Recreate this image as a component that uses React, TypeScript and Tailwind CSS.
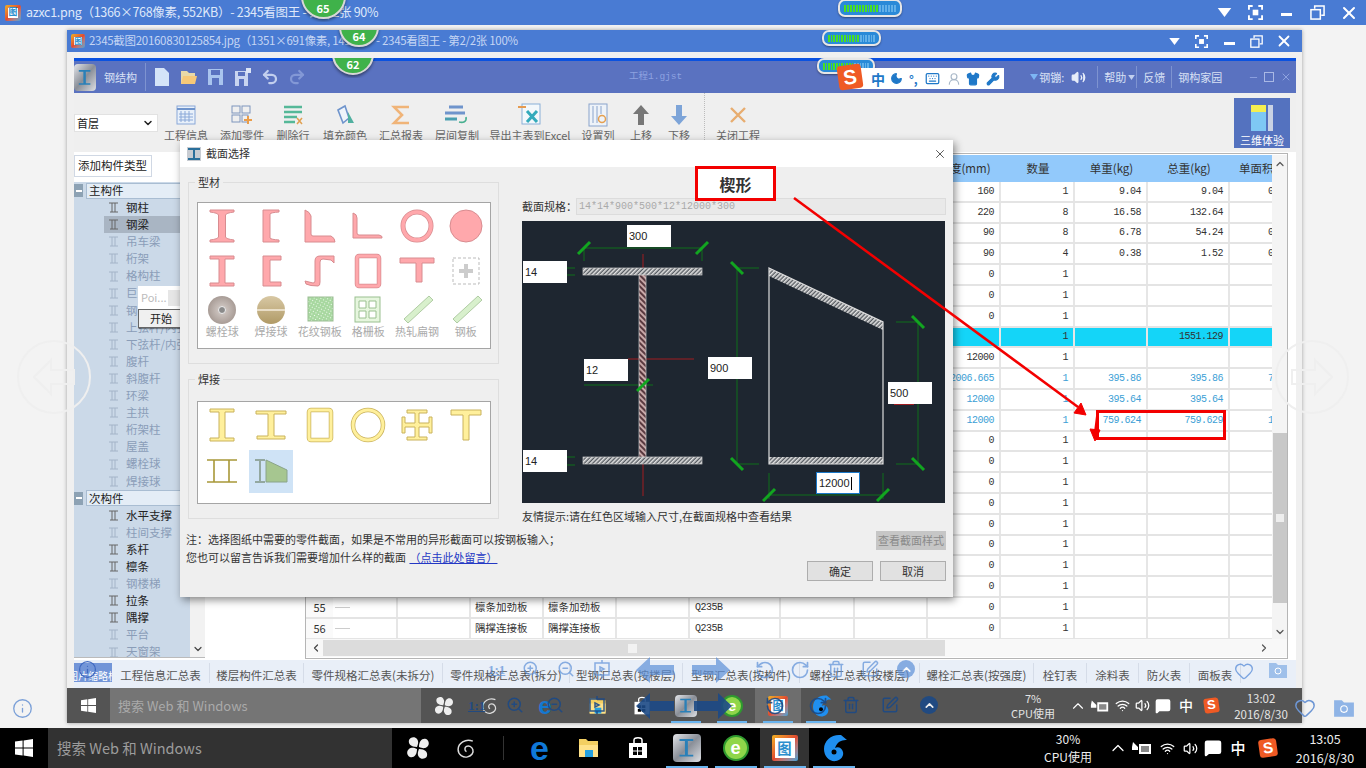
import React from "react";
import { ChevronDown, ChevronUp, ChevronLeft, ChevronRight, ZoomIn, ZoomOut, RotateCcw, RotateCw, Trash2, SquarePen, Heart, Info, Volume2, Wifi, MessageSquare, Wrench, Shirt, Keyboard, Moon, UserRound, X, Minus, Undo2, Redo2 } from "lucide-react";

const WinLogo = ({ s = 18 }: { s?: number }) => (
  <svg width={s} height={s} viewBox="0 0 18 18" fill="#fff">
    <path d="M0 2.6 7.6 1.5V8.5H0ZM8.6 1.4 18 0V8.5H8.6ZM0 9.5H7.6V16.5L0 15.4ZM8.6 9.5H18V18L8.6 16.6Z" />
  </svg>
);
const Pinwheel = ({ s = 24 }: { s?: number }) => (
  <svg width={s} height={s} viewBox="0 0 24 24" fill="#eee">
    <path d="M11 11C5 11 2 8 3 4 4 1 9 0 11 3 13 6 12 8 11 11Z" />
    <path d="M13 11C13 5 16 2 20 3 23 4 24 9 21 11 18 13 16 12 13 11Z" />
    <path d="M13 13C19 13 22 16 21 20 20 23 15 24 13 21 11 18 12 16 13 13Z" />
    <path d="M11 13C11 19 8 22 4 21 1 20 0 15 3 13 6 11 8 12 11 13Z" />
  </svg>
);
const Spiral = ({ s = 20, c = "#ddd" }: { s?: number; c?: string }) => (
  <svg width={s} height={s} viewBox="0 0 20 20" fill="none" stroke={c} strokeWidth="1.4">
    <path d="M16 3C9 0 2 5 2 11c0 5 5 8 9 7 4-1 6-4 5-7-1-3-4-4-6-3-2 1-2 4 0 5" />
  </svg>
);
const Gear = ({ h = 30 }: { h?: number }) => (
  <svg width={h} height={h} viewBox="0 0 30 30">
    <path d="M22 2c-9-1-17 5-17 14 0 8 6 13 12 12 5-1 8-5 7-9-1-4-5-6-8-4 1-3 3-6 6-7 2-1 4-1 6-1Z" fill="#1f8ff0" />
    <circle cx="15" cy="19" r="2.5" fill="#000" />
  </svg>
);
const SteelLogo = ({ w = 28, h = 28, r = "rounded-[4px]" }: { w?: number; h?: number; r?: string }) => (
  <div className={`flex items-center justify-center bg-gradient-to-br from-[#e4e6ea] via-[#8a8f98] to-[#dfe1e5] ${r}`} style={{ width: w, height: h }}>
    <svg width={w * 0.6} height={h * 0.7} viewBox="0 0 16 20" fill="#2a80b8"><path d="M1 1H15V3H9.5V17H15V19H1V17H6.5V3H1Z" /></svg>
  </div>
);
const GreenE = ({ s = 26 }: { s?: number }) => (
  <div className="flex items-center justify-center rounded-full border-2 border-[#2f9a2f] bg-[#8fd64a] font-['Liberation_Sans',sans-serif] font-bold leading-none text-white" style={{ width: s, height: s, fontSize: s * 0.7 }}>e</div>
);
const ViewerIcon = ({ s = 24 }: { s?: number }) => (
  <div className="flex items-center justify-center rounded-[2px] bg-gradient-to-br from-[#f0b020] via-[#e04a30] to-[#30a0d8] p-[3px]" style={{ width: s, height: s }}>
    <div className="flex h-full w-full items-center justify-center bg-white font-bold leading-none text-[#2b8fce]" style={{ fontSize: s * 0.55 }}>图</div>
  </div>
);
const FolderIcon = ({ s = 24 }: { s?: number }) => (
  <svg width={s} height={s} viewBox="0 0 24 24"><path d="M2 3H9L11 5H21V21H2Z" fill="#f3cf62" /><path d="M2 9H21V21H2Z" fill="#ffe28a" /><path d="M8 14H16V21H8Z" fill="#25a0e0" /></svg>
);
const StoreIcon = ({ s = 24 }: { s?: number }) => (
  <svg width={s} height={s} viewBox="0 0 24 24" fill="#fff"><path d="M3 7H21V22H3Z" /><path d="M8 7V4C8 1 16 1 16 4V7" fill="none" stroke="#fff" strokeWidth="1.5" /><path d="M7 11H11V14.5H7ZM12 11H16V14.5H12ZM7 15.5H11V19H7ZM12 15.5H16V19H12Z" fill="#000" /></svg>
);
const SogouS = ({ s = 22 }: { s?: number }) => (
  <div className="flex rotate-[-8deg] items-center justify-center rounded-[3px] bg-[#ef5a24] font-['Liberation_Sans',sans-serif] font-bold leading-none text-white" style={{ width: s, height: s, fontSize: s * 0.85 }}>S</div>
);
const Plug = () => (
  <svg width="22" height="16" viewBox="0 0 22 16" fill="#fff"><path d="M2 2 7 7V10H1V7ZM8 4H20V14H8Z" /><path d="M10 6H18V12H10Z" fill="#888" /></svg>
);
const WinBtns = ({ small }: { small?: boolean }) => {
  const cls = small ? "w-[27.5px]" : "w-[31px]";
  const s = small ? 13 : 15;
  return (
    <div className="flex items-center text-white">
      <div className={`${cls} flex justify-center`}><svg width={s} height={s - 6} viewBox="0 0 12 8" fill="#fff"><path d="M0 0H12L6 8Z" /></svg></div>
      <div className={`${cls} flex justify-center`}><svg width={s} height={s} viewBox="0 0 16 16" fill="none" stroke="#fff" strokeWidth="2"><path d="M1 5V1H5M11 1H15V5M15 11V15H11M5 15H1V11" /><rect x="5" y="5" width="6" height="6" fill="#fff" stroke="none" /></svg></div>
      <div className={`${cls} flex justify-center`}><div className="mt-1 h-[3px] w-[11px] bg-white" /></div>
      <div className={`${cls} flex justify-center`}><svg width={s} height={s} viewBox="0 0 16 16" fill="none" stroke="#fff" strokeWidth="1.6"><path d="M5 4V1H15V11H12" /><rect x="1" y="5" width="10" height="10" /></svg></div>
      <div className={`${cls} flex justify-center`}><X size={s + 5} strokeWidth={2.4} /></div>
    </div>
  );
};
const Badge = ({ n, left, bottom, d }: { n: number; left: number; bottom: number; d: number }) => (
  <div className="absolute overflow-hidden" style={{ left: left - d / 2 - 3, top: bottom - d / 2 - 8, width: d + 6, height: d / 2 + 12 }}>
    <div className="absolute left-[3px] rounded-full border-2 border-[#d8d8d8] bg-[#3fb24a] shadow-[0_2px_3px_rgba(0,0,0,.4)]" style={{ width: d, height: d, bottom: 3 }} />
    <div className="absolute left-0 right-0 text-center text-[11px] font-bold text-white" style={{ bottom: 6 }}>{n}</div>
  </div>
);
const Clip = ({ top, height, children }: { top: number; height: number; children: React.ReactNode }) => (
  <div className="absolute left-0 w-full overflow-hidden" style={{ top, height }}>{children}</div>
);
const Pill = ({ x, y, w, h }: { x: number; y: number; w: number; h: number }) => (
  <div className="absolute flex items-center rounded-[7px] border-2 border-[#e6e6e6] bg-[#2a8ad8] px-[4px] shadow-[0_1px_2px_rgba(0,0,0,.4)]" style={{ left: x, top: y, width: w, height: h }}>
    <div className="flex h-[7px] w-full gap-[1px]">
      {Array.from({ length: 18 }).map((_, i) => (
        <div key={i} className={`h-full flex-1 ${i < 12 ? "bg-[#48e022]" : "bg-[#62b0e8]"}`} />
      ))}
    </div>
  </div>
);

/* ---------- ribbon icons ---------- */
const RibbonIcons: Record<string, React.ReactNode> = {
  info: <svg width="20" height="20" viewBox="0 0 20 20" fill="none" stroke="#8aa8d8"><rect x="1" y="1" width="18" height="18" fill="#e8f0fa" /><path d="M1 4H19" stroke="#6f94cc" strokeWidth="2" /><path d="M5 6V17M9 6V17M13 6V17M3 9H17M3 12H17M3 15H17" /></svg>,
  add: <svg width="22" height="20" viewBox="0 0 22 20" fill="none" stroke="#7f96bd"><rect x="1" y="1" width="8" height="7" /><rect x="11" y="1" width="8" height="7" /><rect x="1" y="10" width="8" height="7" /><rect x="11" y="10" width="6" height="7" /><path d="M17 11V19M13 15H21" stroke="#ea9d4a" strokeWidth="2" /></svg>,
  del: <svg width="20" height="20" viewBox="0 0 20 20" stroke="#55b898" strokeWidth="2.5"><path d="M1 2H19M1 7H19M1 12H14M1 17H12" /><path d="M14 13L19 19M19 13L14 19" stroke="#e0a050" strokeWidth="1.5" /></svg>,
  fill: <svg width="22" height="22" viewBox="0 0 22 22" fill="none"><path d="M4 6 11 2 15 14 9 19Z" stroke="#6f94cc" strokeWidth="1.6" fill="#eef4fb" /><path d="M14 8 20 19H14Z" fill="#50b0a0" /></svg>,
  sum: <svg width="20" height="22" viewBox="0 0 20 22" fill="none" stroke="#f0b478" strokeWidth="2.6"><path d="M18 3H3L11 11 3 19H18" /></svg>,
  copy: <svg width="24" height="20" viewBox="0 0 24 20" stroke="#6f94cc" strokeWidth="3"><path d="M4 2H18M0 8H20" /><path d="M0 14H12" stroke="#4a9fb0" /><path d="M21 12C22 17 18 18 14 17" fill="none" stroke="#48b090" strokeWidth="1.6" /></svg>,
  excel: <svg width="24" height="24" viewBox="0 0 24 24" fill="none"><rect x="4" y="1" width="18" height="20" fill="#f3f8fb" stroke="#8ab0d8" /><path d="M9 8 19 19M19 8 9 19" stroke="#33aabb" strokeWidth="3" /><path d="M0 4H8" stroke="#e59a50" strokeWidth="2" /></svg>,
  cols: <svg width="20" height="24" viewBox="0 0 20 24" fill="none" stroke="#8aa4cc"><rect x="1" y="1" width="18" height="22" fill="#eef3f9" /><path d="M5 3V20M9 3V20M13 3V11" /><circle cx="14" cy="16" r="3.5" stroke="#e5a050" strokeWidth="1.5" /></svg>,
  up: <svg width="16" height="20" viewBox="0 0 16 20" fill="#777"><path d="M8 0 16 9H11V20H5V9H0Z" /></svg>,
  down: <svg width="16" height="20" viewBox="0 0 16 20" fill="#7da4d8"><path d="M8 20 16 11H11V0H5V11H0Z" /></svg>,
  close: <svg width="18" height="18" viewBox="0 0 18 18" stroke="#e8ad70" strokeWidth="2.4"><path d="M2 2 16 16M16 2 2 16" /></svg>,
};
const ribbon: [string, string, number][] = [
  ["info", "工程信息", 56], ["add", "添加零件", 56], ["del", "删除行", 46], ["fill", "填充颜色", 58], ["sum", "汇总报表", 54],
  ["copy", "层间复制", 58], ["excel", "导出主表到Excel", 88], ["cols", "设置列", 48], ["up", "上移", 38], ["down", "下移", 38],
];
const RibbonItem = ({ k, label, w }: { k: string; label: string; w: number }) => (
  <div className="flex flex-col items-center" style={{ width: w }}>
    <div className="flex h-[26px] items-center justify-center">{RibbonIcons[k]}</div>
    <div className="whitespace-nowrap text-[11px] leading-[14px] text-[#666]">{label}</div>
  </div>
);

/* ---------- tree ---------- */
const main = [["钢柱", 1], ["钢梁", 2], ["吊车梁", 0], ["桁架", 0], ["格构柱", 0], ["巨型柱", 0], ["钢管桁架", 0], ["上弦杆/内弦杆", 0], ["下弦杆/内弦杆", 0], ["腹杆", 0], ["斜腹杆", 0], ["环梁", 0], ["主拱", 0], ["桁架柱", 0], ["屋盖", 0], ["螺栓球", 0], ["焊接球", 0]] as [string, number][];
const sub = [["水平支撑", 1], ["柱间支撑", 0], ["系杆", 1], ["檩条", 1], ["钢楼梯", 0], ["拉条", 1], ["隅撑", 1], ["平台", 0], ["天窗架", 0]] as [string, number][];
const TreeRow = ({ t, on }: { t: string; on: number }) => (
  <div className="flex h-[17.1px] items-center pl-[34px]">
    <div className={`flex h-[17px] items-center ${on === 2 ? "-ml-[4px] w-[86px] bg-[#a9b5c3] pl-[4px]" : ""}`}>
      <svg width="11" height="11" viewBox="0 0 11 11" fill="none" stroke={on ? "#666" : "#a4b4c8"} strokeWidth="1"><path d="M1 1H10M2 10H10M4 1V10M7 1V10" /></svg>
      <span className={`ml-[7px] whitespace-nowrap text-[11.5px] ${on ? "text-[#222]" : "text-[#8a9db8]"}`}>{t}</span>
    </div>
  </div>
);
const GroupRow = ({ t }: { t: string }) => (
  <div className="flex h-[17.1px] items-center">
    <div className="flex h-[13px] w-[9px] items-center justify-center bg-[#8da2b4]"><div className="h-[2px] w-[6px] bg-white" /></div>
    <div className="ml-[3px] flex h-[16px] w-[104px] items-center border border-[#a9bdd2] bg-[#e4edf6] pl-[2px] text-[11.5px] text-[#222]">{t}</div>
  </div>
);

/* ---------- table ---------- */
const colClass = "grid grid-cols-[27px_65px_73px_73px_73px_73px_91px_74px_73px_73px_74px_73px_82px_43px] w-[968px]";
const W = ["160", "220", "90", "90", "0", "0", "0", "", "12000", "2006.665", "12000", "12000", "0", "0", "0", "0", "0", "0", "0", "0", "0", "0"];
const Q = ["1", "8", "8", "4", "1", "1", "1", "1", "1", "1", "1", "1", "1", "1", "1", "1", "1", "1", "1", "1", "1", "1"];
const U = ["9.04", "16.58", "6.78", "0.38", "", "", "", "", "", "395.86", "395.64", "759.624"];
const T = ["9.04", "132.64", "54.24", "1.52", "", "", "", "1551.129", "", "395.86", "395.64", "759.629"];
const A: Record<number, string> = { 0: "0", 2: "0", 3: "0", 9: "7", 11: "16" };
const Cell = ({ children, c, r }: { children?: React.ReactNode; c?: string; r?: boolean }) => (
  <div className={`flex items-center overflow-hidden whitespace-nowrap border-r-2 border-[#e6e6e6] px-[5px] font-['Liberation_Mono',monospace] text-[10px] tracking-[-0.5px] ${r === false ? "justify-start" : "justify-end"} ${c ?? ""}`}>{children}</div>
);
const TableRow = ({ i }: { i: number }) => {
  const blue = i >= 9 && i <= 11;
  const hi = i === 7;
  const col = blue ? "text-[#3d9fd6]" : "text-[#333]";
  const num = 35 + i;
  const names: Record<number, string> = { 55: "檩条加劲板", 56: "隅撑连接板" };
  return (
    <div className={`${colClass} h-[20.8px] border-b-2 border-[#e4e4e4] ${hi ? "bg-[#14d5f8]" : "bg-white"}`}>
      <div className="flex items-center justify-center bg-[#fafafa] text-[11px] text-[#333]">{num}</div>
      <div className="flex items-center border-r-2 border-[#e6e6e6] pl-[2px]"><div className="h-px w-[15px] bg-[#ccc]" /></div>
      <Cell />
      <div className="flex items-center border-r-2 border-[#e6e6e6] pl-[4px] text-[10.5px] text-[#333]">{names[num]}</div>
      <div className="flex items-center border-r-2 border-[#e6e6e6] pl-[4px] text-[10.5px] text-[#333]">{names[num]}</div>
      <Cell />
      <Cell r={false} c="text-[#333]">{num >= 55 ? "Q235B" : ""}</Cell>
      <Cell />
      <Cell />
      <Cell c={col}>{W[i]}</Cell>
      <Cell c={col}>{Q[i]}</Cell>
      <Cell c={col}>{U[i]}</Cell>
      <Cell c={col}>{T[i]}</Cell>
      <div className={`flex items-center justify-start overflow-hidden pl-[38px] font-['Liberation_Mono',monospace] text-[10px] ${col}`}>{A[i]}</div>
    </div>
  );
};

/* ---------- section shapes ---------- */
const Sec = ({ children, f, s }: { children: React.ReactNode; f: string; s: string }) => (
  <div className="flex items-center justify-center">
    <svg width="44" height="44" viewBox="0 0 44 44" fill={f} stroke={s} strokeWidth="1">{children}</svg>
  </div>
);
const Row3 = ({ children, t }: { children: React.ReactNode; t: string }) => (
  <div className="flex flex-col items-center pt-[2px]">
    <svg width="44" height="30" viewBox="0 0 44 30">{children}</svg>
    <div className="-mt-[1px] whitespace-nowrap text-[11px] leading-[14px] text-[#aaa]">{t}</div>
  </div>
);
const red = { f: "#ffa8ac", s: "#d88c90" };
const yel = { f: "#fff09c", s: "#c9b25c" };

/* ---------- drawing ---------- */
const Tick = ({ x, y, d }: { x: number; y: number; d: "/" | "\\" }) => (
  <line x1={x - 6} y1={d === "/" ? y + 6 : y - 6} x2={x + 6} y2={d === "/" ? y - 6 : y + 6} stroke="#12a520" strokeWidth="3" />
);
const Field = ({ x, y, t, active }: { x: number; y: number; t: string; active?: boolean }) => (
  <div className={`absolute flex h-[22px] w-[44px] items-center bg-white pl-[2px] font-['Liberation_Sans',sans-serif] text-[11px] text-[#222] ${active ? "border border-[#1a78c8]" : ""}`} style={{ left: x, top: y }}>
    {t}{active && <span className="ml-px h-[13px] w-px bg-black" />}
  </div>
);
const Drawing = () => (
  <div className="relative h-[282px] w-[423px] bg-[#1e2630]">
    <svg width="423" height="282" className="block">
      <defs>
        <pattern id="h" width="3" height="3" patternUnits="userSpaceOnUse" patternTransform="rotate(45)">
          <rect width="3" height="3" fill="#555a60" />
          <rect width="1.6" height="3" fill="#e2e2e2" />
        </pattern>
        <pattern id="hr" width="4" height="4" patternUnits="userSpaceOnUse" patternTransform="rotate(-45)">
          <rect width="4" height="4" fill="#c8a8a8" />
          <rect width="2" height="4" fill="#5a3a40" />
        </pattern>
      </defs>
      <g stroke="#a01c20" strokeWidth="1" fill="none">
        <path d="M121 33V275M106 138H172" />
        <path d="M372 183H392" strokeWidth="2" />
      </g>
      <g stroke="#0f6f1a" strokeWidth="1" fill="none">
        <path d="M62 27H180M62 27V40M180 27V40" />
        <path d="M215 47V243M215 47H237M215 243H237" />
        <path d="M396 101V243M374 101H396M374 243H396" />
        <path d="M247 274H361M247 252V278M361 252V278" />
        <path d="M62 164H131" />
        <path d="M45 47H53M45 54H53M45 236H53M45 244H53" />
      </g>
      <Tick x={62} y={27} d="/" /><Tick x={180} y={27} d="/" />
      <Tick x={215} y={47} d="\" /><Tick x={215} y={243} d="\" />
      <Tick x={396} y={101} d="\" /><Tick x={396} y={243} d="\" />
      <Tick x={247} y={274} d="/" /><Tick x={361} y={274} d="/" />
      <rect x="61" y="47" width="119" height="7" fill="url(#h)" stroke="#ccc" strokeWidth=".7" />
      <rect x="61" y="236" width="119" height="7" fill="url(#h)" stroke="#ccc" strokeWidth=".7" />
      <rect x="117" y="54" width="7" height="182" fill="url(#hr)" stroke="#ccc" strokeWidth=".7" />
      <Tick x={121} y={164} d="/" />
      <path d="M247 47 361 101V109L247 55Z" fill="url(#h)" />
      <rect x="247" y="236" width="114" height="7" fill="url(#h)" />
      <path d="M247 47 361 101V243H247Z" fill="none" stroke="#ddd" strokeWidth="1.2" />
    </svg>
    <Field x={105} y={4} t="300" />
    <Field x={1} y={40} t="14" />
    <Field x={62} y={138} t="12" />
    <Field x={1} y={229} t="14" />
    <Field x={186} y={136} t="900" />
    <Field x={366} y={161} t="500" />
    <Field x={294} y={251} t="12000" active />
  </div>
);

const Dialog = () => (
  <div className="absolute left-[180px] top-[140px] flex h-[457px] w-[773px] flex-col bg-[#efefef] shadow-[2px_3px_8px_rgba(0,0,0,.45)]">
    <div className="flex h-[27px] shrink-0 items-center bg-white px-[7px]">
      <svg width="14" height="14" viewBox="0 0 14 14"><rect width="14" height="14" fill="#c8ccd2" /><path d="M1 2H13M1 12H13M7 2V12" stroke="#2a6f9a" strokeWidth="2" /></svg>
      <span className="ml-[5px] text-[11px] text-[#333]">截面选择</span>
      <X size={14} strokeWidth={1.5} className="ml-auto mr-[-1px] text-[#444]" />
    </div>
    <div className="flex flex-1">
      <div className="w-[342px] pl-[6px]">
        <div className="relative ml-[2px] mt-[15px] h-[182px] w-[311px] border border-[#dedede] pl-[8px] pt-[19px]">
          <span className="absolute left-[6px] top-[-8px] bg-[#efefef] px-[3px] text-[11px] leading-[14px] text-[#333]">型材</span>
          <div className="grid h-[147px] w-[294px] grid-cols-6 grid-rows-[45px_45px_52px] border border-[#a5a5a5] bg-white">
            <Sec {...red}><path d="M10 6H34V8Q26 9 25.5 11V33Q26 35 34 36V38H10V36Q18 35 18.5 33V11Q18 9 10 8Z" /></Sec>
            <Sec {...red}><path d="M14 6H30V8Q22 8.5 21 10V34Q22 35.5 30 36V38H14Z" /></Sec>
            <Sec {...red}><path d="M7 6Q12 8 13 12V30Q13 32 15 32H33Q37 34 37 38H7Z" /></Sec>
            <Sec {...red}><path d="M7 9Q11 10 11 14V29Q11 31 13 31H33Q37 32 36 34H7Z" /></Sec>
            <Sec {...red}><circle cx="22" cy="22" r="14" fill="none" stroke="#d88c90" strokeWidth="5" /><circle cx="22" cy="22" r="14" fill="none" stroke="#ffa8ac" strokeWidth="3.5" /></Sec>
            <Sec {...red}><circle cx="22" cy="22" r="16" /></Sec>
            <Sec {...red}><path d="M10 7H34V10H25V34H34V37H10V34H19V10H10Z" /></Sec>
            <Sec {...red}><path d="M14 7H32V11H21V33H32V37H14Z" /></Sec>
            <Sec {...red}><path d="M36 7H22Q17 7 17 12V32Q17 34 15 34L7 32 8 35Q12 37 20 37 22 37 22 33V13Q22 10 25 10L33 11 36 14Z" /></Sec>
            <Sec {...red}><rect x="11" y="7" width="22" height="30" rx="2" fill="none" stroke="#d88c90" strokeWidth="4.5" /><rect x="11" y="7" width="22" height="30" rx="2" fill="none" stroke="#ffa8ac" strokeWidth="3" /></Sec>
            <Sec {...red}><path d="M5 9H39V14H27V33H21V14H5Z" /></Sec>
            <Sec f="#ccc" s="none"><rect x="9" y="9" width="26" height="26" fill="none" stroke="#bbb" strokeDasharray="3 2" /><path d="M20 15H24V20H29V24H24V29H20V24H15V20H20Z" /></Sec>
            <Row3 t="螺栓球"><defs><radialGradient id="b1"><stop offset="0" stopColor="#d8d0cc" /><stop offset="1" stopColor="#a89c96" /></radialGradient></defs><circle cx="22" cy="15" r="14" fill="url(#b1)" /><circle cx="22" cy="15" r="3.5" fill="#8a8a8a" stroke="#eee" /></Row3>
            <Row3 t="焊接球"><defs><linearGradient id="b2" x1="0" y1="0" x2="0" y2="1"><stop offset="0" stopColor="#d8c8a4" /><stop offset="1" stopColor="#b09a66" /></linearGradient></defs><circle cx="22" cy="15" r="14" fill="url(#b2)" /><path d="M8 15H36" stroke="#f4eddc" strokeWidth="1.5" /></Row3>
            <Row3 t="花纹钢板"><defs><pattern id="b3" width="3" height="3" patternUnits="userSpaceOnUse" patternTransform="rotate(30)"><rect width="3" height="3" fill="#a8d8a0" /><rect width="1" height="1" fill="#f2fbf0" /></pattern></defs><rect x="10" y="2" width="25" height="24" fill="url(#b3)" stroke="#9bbd94" /></Row3>
            <Row3 t="格栅板"><rect x="9" y="2" width="25" height="25" fill="#e6f6de" stroke="#9ac090" /><path d="M13 6H20V13H13ZM23 6H30V13H23ZM13 16H20V23H13ZM23 16H30V23H23Z" fill="#fff" stroke="#9ac090" /></Row3>
            <Row3 t="热轧扁钢"><path d="M34 1 38 5 13 28 9 24Z" fill="#d8f0cc" stroke="#b0cca4" /></Row3>
            <Row3 t="钢板"><path d="M34 1 38 5 13 28 9 24Z" fill="#d8f0cc" stroke="#b0cca4" /></Row3>
          </div>
        </div>
        <div className="relative ml-[2px] mt-[15px] h-[140px] w-[311px] border border-[#dedede] pl-[8px] pt-[21px]">
          <span className="absolute left-[6px] top-[-8px] bg-[#efefef] px-[3px] text-[11px] leading-[14px] text-[#333]">焊接</span>
          <div className="grid h-[103px] w-[294px] grid-cols-6 grid-rows-[46px_46px] border border-[#a5a5a5] bg-white">
            <Sec {...yel}><path d="M10 6H34V9H25V35H34V38H10V35H19V9H10Z" /></Sec>
            <Sec {...yel}><path d="M7 8H37V11H25V33H36V36H8V33H19V11H7Z" /></Sec>
            <Sec {...yel}><rect x="11" y="7" width="22" height="30" rx="2" fill="none" stroke="#c9b25c" strokeWidth="4.5" /><rect x="11" y="7" width="22" height="30" rx="2" fill="none" stroke="#fff09c" strokeWidth="3" /></Sec>
            <Sec {...yel}><circle cx="22" cy="22" r="15" fill="none" stroke="#c9b25c" strokeWidth="4.5" /><circle cx="22" cy="22" r="15" fill="none" stroke="#fff09c" strokeWidth="3" /></Sec>
            <Sec {...yel}><path d="M12 7H32V10H24V20H34V14H37V30H34V24H24V34H32V37H12V34H20V24H10V30H7V14H10V20H20V10H12Z" /></Sec>
            <Sec {...yel}><path d="M7 7H37V12H25V37H19V12H7Z" /></Sec>
            <Sec f="none" s="#a89838"><path d="M7 11H37M7 33H37M14 11V33M29 11V33" strokeWidth="1.6" /></Sec>
            <div className="flex items-center justify-center">
              <div className="flex h-[43px] w-[44px] items-center justify-center bg-[#cfe3f6]">
                <svg width="34" height="26" viewBox="0 0 34 26" fill="none"><path d="M1 2H11M1 24H11M6 2V24" stroke="#93a8a0" strokeWidth="2" /><path d="M12 2 33 12V24H12Z" fill="#a6c690" stroke="#8aa48a" /></svg>
              </div>
            </div>
          </div>
        </div>
        <div className="mt-[11px] whitespace-nowrap text-[11px] leading-[18px] text-[#333]">
          <div>注：选择图纸中需要的零件截面，如果是不常用的异形截面可以按钢板输入；</div>
          <div>您也可以留言告诉我们需要增加什么样的截面 <span className="ml-[1px] text-[#2438c4] underline">（点击此处留言）</span></div>
        </div>
      </div>
      <div className="w-[424px] pt-[31px]">
        <div className="flex h-[17px] items-center">
          <span className="w-[54px] whitespace-nowrap text-[11px] text-[#333]">截面规格：</span>
          <div className="flex h-[17px] flex-1 items-center border border-[#dcdcdc] bg-[#e9e9e9] pl-[2px] font-['Liberation_Mono',monospace] text-[10px] text-[#aaa]">14*14*900*500*12*12000*300</div>
        </div>
        <div className="mt-[6px]"><Drawing /></div>
        <div className="mt-[4px] h-[18px] text-[11px] leading-[18px] text-[#333]">友情提示:请在红色区域输入尺寸,在截面规格中查看结果</div>
        <div className="mt-[6px] flex justify-end">
          <div className="flex h-[19px] w-[70px] items-center justify-center bg-[#c6c6c6] text-[11px] text-[#8a8a8a]">查看截面样式</div>
        </div>
        <div className="mt-[11px] flex justify-end gap-[7px]">
          <div className="flex h-[20px] w-[66px] items-center justify-center border border-[#adadad] bg-[#e1e1e1] text-[11px] text-[#333]">确定</div>
          <div className="flex h-[20px] w-[66px] items-center justify-center border border-[#adadad] bg-[#e1e1e1] text-[11px] text-[#333]">取消</div>
        </div>
      </div>
    </div>
  </div>
);

const tabs: [string, number][] = [["工程信息汇总表", 98], ["楼层构件汇总表", 94], ["零件规格汇总表(未拆分)", 139], ["零件规格汇总表(拆分)", 127], ["型钢汇总表(按楼层)", 113], ["型钢汇总表(按构件)", 117], ["螺栓汇总表(按楼层)", 120], ["螺栓汇总表(按强度)", 114], ["栓钉表", 53], ["涂料表", 52], ["防火表", 51], ["面板表", 51]];

const Slot = ({ w, children, c }: { w: number; children?: React.ReactNode; c?: string }) => (
  <div className={`relative flex h-full shrink-0 items-center justify-center ${c ?? ""}`} style={{ width: w }}>{children}</div>
);
const Run = ({ w = 30 }: { w?: number }) => <div className="absolute bottom-0 left-1/2 h-[2px] -translate-x-1/2 bg-[#6ab4ee]" style={{ width: w }} />;

const Tray = ({ big, w }: { big?: boolean; w: number[] }) => (
  <>
    <Slot w={w[0]}><ChevronUp size={big ? 20 : 18} className="text-white" strokeWidth={1.5} /></Slot>
    <Slot w={w[1]}><Plug /></Slot>
    <Slot w={w[2]}><Wifi size={15} className="text-white" /></Slot>
    <Slot w={w[3]}><Volume2 size={15} className="text-white" /></Slot>
    <Slot w={w[4]}><MessageSquare size={big ? 18 : 16} fill="#fff" className="text-white" /></Slot>
    <Slot w={w[5]}><span className={`${big ? "text-[15px]" : "text-[14px]"} font-medium text-white`}>中</span></Slot>
    <Slot w={w[6]}><SogouS s={big ? 18 : 15} /></Slot>
  </>
);

export default function App() {
  return (
    <div className="relative flex h-[768px] w-[1366px] flex-col overflow-hidden bg-[#f3f3f3] font-['Noto_Sans_CJK_SC','Noto_Sans',sans-serif]">
      {/* outer title bar */}
      <div className="flex h-[25px] shrink-0 items-center bg-[#497bd3] pl-[5px]">
        <ViewerIcon s={16} />
        <span className="ml-[5px] whitespace-nowrap text-[12.5px] tracking-[-0.3px] text-[#dfe8fa]">azxc1.png（1366×768像素, 552KB）- 2345看图王 - 第1/2张 90%</span>
        <div className="ml-auto pr-[2px]"><WinBtns /></div>
      </div>

      {/* desktop */}
      <div className="h-[703px] shrink-0">
        <div className="ml-[67px] mt-[5px] flex h-[693px] w-[1235px] flex-col bg-[#f0f0f0] shadow-[0_0_4px_rgba(0,0,0,.35)]">
          <div className="flex h-[22px] shrink-0 items-center bg-[#497bd3] pl-[4px]">
            <ViewerIcon s={14} />
            <span className="ml-[4px] whitespace-nowrap text-[11.5px] tracking-[-0.3px] text-[#c5d6f4]">2345截图20160830125854.jpg（1351×691像素, 141KB）- 2345看图王 - 第2/2张 100%</span>
            <div className="ml-auto pr-[4px]"><WinBtns small /></div>
          </div>
          <div className="h-[6px] shrink-0" />
          {/* inner app */}
          <div className="ml-[7px] flex h-[630px] w-[1222px] shrink-0 flex-col bg-white">
            <div className="h-[3px] shrink-0 bg-[#0a52e0]" />
            <div className="flex h-[32px] shrink-0 items-center bg-[#5a72c0]">
              <SteelLogo w={22} h={27} />
              <span className="ml-[8px] whitespace-nowrap text-[11px] text-[#d8e0f4]">钢结构</span>
              <div className="ml-[8px] h-[28px] w-px bg-[#7e93d0]" />
              <div className="ml-[2px] flex h-full items-center">
                <Slot w={27}><svg width="14" height="18" viewBox="0 0 14 18" fill="#d4e4f8"><path d="M0 0H9L14 5V18H0Z" /></svg></Slot>
                <Slot w={27}><svg width="16" height="14" viewBox="0 0 16 14"><path d="M0 1H6L8 3H14V14H0Z" fill="#e8d8a8" /><path d="M2 6H16L14 14H0Z" fill="#f6c878" /></svg></Slot>
                <Slot w={27}><svg width="15" height="16" viewBox="0 0 15 16" fill="#a9c4ee"><path d="M0 0H15V16H0Z" /><path d="M3 1H12V6H3ZM4 9H11V16H4Z" fill="#5a72c0" /></svg></Slot>
                <Slot w={27}><svg width="16" height="18" viewBox="0 0 16 18" fill="#c8d4f0"><path d="M0 3H13V18H0Z" /><path d="M3 4H10V8H3ZM4 11H9V18H4Z" fill="#5a72c0" /><path d="M11 0H16V5H11Z" fill="#dbe4f6" /></svg></Slot>
                <Slot w={27}><Undo2 size={18} strokeWidth={3} className="text-[#c2cfee]" /></Slot>
                <Slot w={27}><Redo2 size={18} strokeWidth={3} className="text-[#8398d6]" /></Slot>
              </div>
              <span className="ml-[319px] whitespace-nowrap font-['Liberation_Mono','Noto_Sans_CJK_SC',monospace] text-[9.5px] text-[#8ea2e0]">工程1.gjst</span>
              <div className="ml-[348px] flex h-full items-center text-[11px] text-[#d8e0f4]">
                <svg width="8" height="6" viewBox="0 0 8 6" fill="#7db6f4"><path d="M0 0H8L4 6Z" /></svg>
                <span className="ml-[1px] whitespace-nowrap">钢镚:</span>
                <Volume2 size={15} fill="#e8eefa" className="ml-[7px] text-[#e8eefa]" />
                <div className="ml-[11px] h-[22px] w-px bg-[#7e93d0]" />
                <span className="ml-[6px] whitespace-nowrap">帮助</span>
                <svg className="ml-[2px]" width="7" height="5" viewBox="0 0 8 6" fill="#c2cfee"><path d="M0 0H8L4 6Z" /></svg>
                <div className="ml-[1px] h-[22px] w-px bg-[#7e93d0]" />
                <span className="ml-[6px] whitespace-nowrap">反馈</span>
                <div className="ml-[6px] h-[22px] w-px bg-[#7e93d0]" />
                <span className="ml-[6px] whitespace-nowrap">钢构家园</span>
                <Minus size={11} className="ml-[26px] text-[#8ea2e0]" />
                <div className="ml-[5px] h-[10px] w-[10px] border border-[#a9b8e4]" />
                <X size={12} className="ml-[6px] text-[#8ea2e0]" />
              </div>
            </div>
            <div className="flex h-[59px] shrink-0 bg-[#efefef]">
              <div className="w-[84px] pt-[21px]">
                <div className="flex h-[18px] w-[84px] items-center justify-between border border-[#e2e2e2] bg-white pl-[2px] pr-[3px] text-[11px] text-[#222]">首层<ChevronDown size={12} strokeWidth={3} /></div>
              </div>
              <div className="flex pt-[9px]">
                {ribbon.map(([k, l, w]) => <RibbonItem key={l} k={k} label={l} w={w} />)}
              </div>
              <div className="ml-[6px] h-full border-l border-dotted border-[#bbb]" />
              <div className="pt-[9px]"><RibbonItem k="close" label="关闭工程" w={66} /></div>
              <div className="ml-[463px] mt-[5px] flex h-[50px] w-[56px] flex-col items-center bg-[#5472bf] pt-[7px]">
                <svg width="22" height="26" viewBox="0 0 22 26"><rect width="15" height="7" fill="#f4ee50" /><rect y="7" width="15" height="19" fill="#7ec8f4" /><rect x="17" width="5" height="26" fill="#c9d2e4" /></svg>
                <div className="mt-[2px] whitespace-nowrap text-[11px] leading-[14px] text-white">三维体验</div>
              </div>
            </div>
            {/* main */}
            <div className="flex h-[508px] shrink-0 bg-white">
              <div className="w-[131px] shrink-0 pt-[3px]">
                <div className="flex h-[22px] w-[78px] items-center border border-[#d0d8e4] pl-[3px] text-[11.5px] text-[#222]">添加构件类型</div>
                <div className="mt-[5px] flex h-[476px] border-b border-[#bbb]">
                  <div className="w-[116px] overflow-hidden bg-[#cbd9e8]">
                    <GroupRow t="主构件" />
                    {main.map(([t, o]) => <TreeRow key={t} t={t} on={o} />)}
                    <GroupRow t="次构件" />
                    {sub.map(([t, o]) => <TreeRow key={t} t={t} on={o} />)}
                  </div>
                  <div className="flex w-[15px] flex-col items-center justify-end bg-[#f2f2f2] pb-[2px]"><ChevronDown size={12} strokeWidth={2.4} className="text-[#444]" /></div>
                </div>
              </div>
              <div className="w-[100px] shrink-0" />
              <div className="mt-px flex h-[506px] w-[983px] shrink-0 flex-col border border-[#b5b5b5] bg-white">
                <div className="h-px" />
                <div className="flex h-[484px]">
                  <div className="w-[966px] overflow-hidden">
                    <div className={`${colClass} h-[27px] bg-[#92c9fb] text-[11.5px] text-[#333]`}>
                      <div /><div /><div /><div /><div /><div /><div /><div /><div />
                      <div className="flex items-center justify-center whitespace-nowrap">长度(mm)</div>
                      <div className="flex items-center justify-center">数量</div>
                      <div className="flex items-center justify-center whitespace-nowrap">单重(kg)</div>
                      <div className="flex items-center justify-center whitespace-nowrap">总重(kg)</div>
                      <div className="flex items-center overflow-hidden whitespace-nowrap pl-[9px]">单面积</div>
                    </div>
                    {Array.from({ length: 22 }).map((_, i) => <TableRow key={i} i={i} />)}
                  </div>
                  <div className="flex w-[15px] flex-col items-center bg-[#f4f4f4]">
                    <ChevronUp size={12} strokeWidth={2.4} className="mt-[3px] text-[#555]" />
                    <div className="mt-[263px] flex h-[170px] w-[14px] items-center justify-center bg-[#c8c8c8]"><div className="h-[8px] w-[8px] bg-[#eee]" /></div>
                    <ChevronDown size={12} strokeWidth={2.4} className="mt-auto mb-[1px] text-[#555]" />
                  </div>
                </div>
                <div className="flex h-[18px] items-center bg-[#f8f8f8]">
                  <ChevronLeft size={12} strokeWidth={2.4} className="ml-[4px] text-[#444]" />
                  <div className="ml-[1px] flex h-[16px] w-[622px] items-center justify-end bg-[#dcdcdc] pr-[308px]"><div className="h-[9px] w-[9px] bg-[#f2f2f2]" /></div>
                  <ChevronRight size={12} strokeWidth={2.4} className="ml-auto mr-[17px] text-[#555]" />
                </div>
              </div>
            </div>
            {/* tabs */}
            <div className="flex h-[28px] shrink-0 items-start bg-[#e9eff8] pt-[3px]">
              <div className="flex h-[19px] w-[38px] shrink-0 items-end justify-center overflow-hidden whitespace-nowrap bg-[#7295d8] text-[10px] leading-[12px] text-white">图片缩略栏</div>
              {tabs.map(([t, w]) => (
                <div key={t} className="flex h-[20px] shrink-0 items-center justify-center whitespace-nowrap border-r border-[#d5dce8] pt-[6px] text-[11.5px] text-[#555]" style={{ width: w }}>{t}</div>
              ))}
            </div>
          </div>
          {/* inner taskbar */}
          <div className="flex h-[35px] shrink-0 items-center bg-[#545454]">
            <Slot w={43}><WinLogo s={15} /></Slot>
            <div className="flex h-full w-[311px] items-center bg-[#757575] pl-[8px] text-[13px] text-[#aaa]">搜索 Web 和 Windows</div>
            <Slot w={46}><Pinwheel s={20} /></Slot>
            <Slot w={46}><Spiral s={18} /></Slot>
            <Slot w={9} />
            <Slot w={46}><span className="font-['Liberation_Sans',sans-serif] text-[24px] font-bold leading-none text-[#1478d0]">e</span></Slot>
            <Slot w={7} />
            <Slot w={46}><FolderIcon s={20} /></Slot>
            <Slot w={42}><StoreIcon s={20} /></Slot>
            <Slot w={46}><SteelLogo w={22} h={22} /><Run /></Slot>
            <Slot w={46}><GreenE s={22} /><Run /></Slot>
            <Slot w={46} c="bg-[#6e6e6e]"><ViewerIcon s={20} /><Run /></Slot>
            <Slot w={40}><Gear h={24} /><Run /></Slot>
            <div className="ml-[162px] flex w-[60px] flex-col items-center text-[11px] leading-[15px] text-[#e4e4e4]"><span>7%</span><span className="whitespace-nowrap">CPU使用</span></div>
            <div className="w-[3px]" />
            <Tray w={[24, 20, 24, 16, 26, 20, 30]} />
            <div className="flex w-[70px] flex-col items-center text-[11.5px] leading-[16px] text-[#e4e4e4]"><span>13:02</span><span>2016/8/30</span></div>
          </div>
        </div>
      </div>

      {/* bottom taskbar */}
      <div className="flex h-[40px] shrink-0 items-center bg-[#000]">
        <Slot w={48}><WinLogo /></Slot>
        <div className="flex h-full w-[344px] items-center bg-[#323232] pl-[9px] text-[14.5px] text-[#9c9c9c]">搜索 Web 和 Windows</div>
        <div className="w-px" />
        <Slot w={49}><Pinwheel s={24} /></Slot>
        <Slot w={49}><Spiral s={21} /></Slot>
        <Slot w={24}><div className="h-[24px] w-px bg-[#333]" /></Slot>
        <Slot w={49}><span className="font-['Liberation_Sans',sans-serif] text-[34px] font-bold leading-none text-[#0f78d8]">e</span></Slot>
        <Slot w={49}><FolderIcon /></Slot>
        <Slot w={49}><StoreIcon /></Slot>
        <Slot w={49}><SteelLogo w={28} h={28} /><Run w={42} /></Slot>
        <Slot w={49}><GreenE s={26} /><Run w={42} /></Slot>
        <Slot w={49} c="bg-[#333]"><ViewerIcon s={26} /><Run w={42} /></Slot>
        <Slot w={49}><Gear /><Run w={42} /></Slot>
        <div className="ml-[180px] flex w-[60px] flex-col items-center text-[12px] leading-[18px] text-[#eee]"><span>30%</span><span className="whitespace-nowrap">CPU使用</span></div>
        <div className="w-[8px]" />
        <Tray big w={[24, 24, 26, 20, 26, 24, 36]} />
        <div className="flex w-[78px] flex-col items-center text-[12.5px] leading-[19px] text-[#eee]"><span>13:05</span><span>2016/8/30</span></div>
      </div>

      {/* ghost nav arrows */}
      <div className="absolute left-[17px] top-[340px] flex h-[74px] w-[74px] items-center justify-center rounded-full border-2 border-[#efefef]"><svg width="46" height="40" viewBox="0 0 46 40" fill="none" stroke="#efefef" strokeWidth="2"><path d="M20 3 3 20 20 37V27H43V13H20Z" /></svg></div>
      <div className="absolute left-[1275px] top-[340px] flex h-[74px] w-[74px] items-center justify-center rounded-full border-2 border-[#efefef]"><svg width="46" height="40" viewBox="0 0 46 40" fill="none" stroke="#efefef" strokeWidth="2"><path d="M26 3 43 20 26 37V27H3V13H26Z" /></svg></div>

      {/* viewer overlay, level 2 */}
      {[{ y: 660, c: "#5d90d8", o: "opacity-70", ic: [497, 531, 566, 602, 655, 711, 765, 800, 836, 870, 906] }, { y: 696, c: "#1c4a86", o: "opacity-90", ic: [477, 515, 555, 597, 655, 713, 775, 818, 851, 890, 929] }].map(({ y, c, o, ic }, n) => (
        <div key={n} className={`absolute left-0 top-0 ${o}`} style={{ color: c }}>
          <span className="absolute whitespace-nowrap font-['Liberation_Serif',serif] text-[13px] font-bold underline" style={{ left: ic[0] - 9, top: y }}>1:1</span>
          <ZoomIn size={18} className="absolute" style={{ left: ic[1] - 9, top: y }} />
          <ZoomOut size={18} className="absolute" style={{ left: ic[2] - 9, top: y }} />
          <svg className="absolute" width="18" height="18" viewBox="0 0 18 18" fill="none" stroke="currentColor" strokeWidth="1.5" style={{ left: ic[3] - 9, top: y }}><rect x="2" y="3" width="14" height="12" /><path d="M9 0V3M9 15V18M7 7 11 9 7 11Z" /></svg>
          <svg className="absolute" width="38" height="26" viewBox="0 0 38 26" fill="currentColor" style={{ left: ic[4] - 19, top: y - 3 }}><path d="M14 0 0 13 14 26V18H38V8H14Z" /></svg>
          <svg className="absolute" width="38" height="26" viewBox="0 0 38 26" fill="currentColor" style={{ left: ic[5] - 19, top: y - 3 }}><path d="M24 0 38 13 24 26V18H0V8H24Z" /></svg>
          <RotateCcw size={20} className="absolute" style={{ left: ic[6] - 10, top: y }} />
          <RotateCw size={20} className="absolute" style={{ left: ic[7] - 10, top: y }} />
          <Trash2 size={18} className="absolute" style={{ left: ic[8] - 9, top: y }} />
          <SquarePen size={18} className="absolute" style={{ left: ic[9] - 9, top: y }} />
          <div className="absolute flex h-[18px] w-[18px] items-center justify-center rounded-full" style={{ left: ic[10] - 9, top: y, backgroundColor: c }}><ChevronUp size={13} strokeWidth={3} className="text-white" /></div>
        </div>
      ))}
      <Info size={19} strokeWidth={1.6} className="absolute left-[78px] top-[660px] text-[#3f68c0]" />
      <Info size={21} strokeWidth={1.5} className="absolute left-[12px] top-[698px] text-[#7ba0d8]" />
      <Heart size={20} strokeWidth={1.6} className="absolute left-[1234px] top-[661px] text-[#7ba4e0]" />
      <Heart size={22} strokeWidth={1.6} className="absolute left-[1294px] top-[697px] text-[#6d96d4]" />
      <svg className="absolute left-[1268px] top-[661px]" width="20" height="18" viewBox="0 0 20 18"><path d="M1 2H8L10 4H19V17H1Z" fill="#9fc0ea" /><circle cx="10" cy="10" r="3" fill="none" stroke="#fff" /></svg>
      <svg className="absolute left-[1333px] top-[698px]" width="22" height="20" viewBox="0 0 20 18"><path d="M1 2H8L10 4H19V17H1Z" fill="#8fb4e6" /><circle cx="10" cy="10" r="3" fill="none" stroke="#fff" /></svg>

      {/* recording badges */}
      <Clip top={0} height={25}><Badge n={65} left={323} bottom={18} d={45} /></Clip>
      <Clip top={30} height={22}><Badge n={64} left={359} bottom={16} d={40} /></Clip>
      <Clip top={58} height={22}><Badge n={62} left={353} bottom={16} d={42} /></Clip>
      <Pill x={838} y={-1} w={64} h={18} />
      <Pill x={822} y={30} w={59} h={16} />
      <Pill x={817} y={58} w={58} h={16} />

      {/* sogou bar */}
      <div className="absolute left-[850px] top-[68px] flex h-[21px] w-[154px] items-center bg-white pl-[18px] text-[#1f78c8]">
        <span className="w-[20px] text-center text-[14px] font-bold leading-none">中</span>
        <Moon size={13} fill="currentColor" className="ml-[2px]" />
        <span className="ml-[6px] w-[14px] text-[12px] font-bold leading-none">°,</span>
        <Keyboard size={15} className="ml-[2px]" />
        <UserRound size={14} className="ml-[7px] text-[#a9b8c8]" />
        <Shirt size={14} fill="currentColor" className="ml-[5px]" />
        <Wrench size={14} fill="currentColor" className="ml-[6px]" />
      </div>
      <div className="absolute left-[838px] top-[65px]"><SogouS s={24} /></div>

      {/* popup */}
      <div className="absolute left-[138px] top-[286px] w-[47px]">
        <div className="flex h-[23px] items-center bg-white pl-[3px] text-[11px] text-[#bbb]">Poi...<div className="ml-auto h-[16px] w-[17px] bg-[#e6e6e6]" /></div>
        <div className="flex h-[19px] w-[46px] items-center justify-center border border-[#666] bg-[#f0f0f0] text-[11px] text-[#222] shadow-[1px_1px_1px_rgba(0,0,0,.4)]">开始</div>
      </div>

      <Dialog />

      {/* annotations */}
      <div className="absolute left-[695px] top-[166px] flex h-[35px] w-[81px] items-center justify-center border-[3px] border-[#f30000] bg-white text-[16px] font-bold text-[#333]">楔形</div>
      <div className="absolute left-[1096px] top-[410px] h-[30px] w-[130px] border-[3px] border-[#f30000]" />
      <svg className="absolute left-0 top-0" width="1366" height="768" fill="#f30000" stroke="#f30000">
        <path d="M794 198 1078 407" strokeWidth="2.5" fill="none" />
        <path d="M1086 415 1074 413 1081 403Z" strokeWidth="1" />
        <path d="M1097 416 1095 432" strokeWidth="2" fill="none" />
        <path d="M1095 441 1090 429 1100 430Z" strokeWidth="1" />
      </svg>
    </div>
  );
}
